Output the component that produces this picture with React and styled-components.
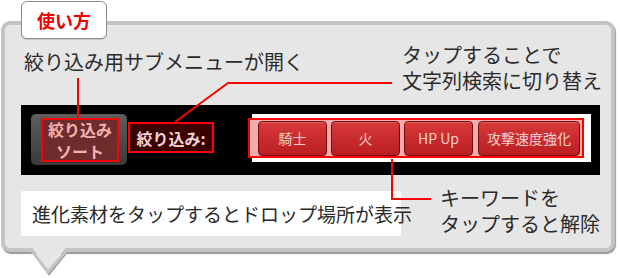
import styled, { createGlobalStyle } from "styled-components";

const GlobalStyle = createGlobalStyle`
    body {
        margin: 0;
        background: #ffffff;
        font-family: "Noto Sans CJK JP", "Noto Sans", sans-serif;
    }
`;

const Page = styled.div`
    position: relative;
    width: 620px;
    height: 278px;
    padding-top: 1px;
    box-sizing: border-box;
`;

const Tab = styled.div`
    position: relative;
    z-index: 2;
    margin-left: 21px;
    width: 86px;
    height: 38px;
    box-sizing: border-box;
    background: #ffffff;
    border: 1px solid #8c8c8c;
    border-radius: 6px;
    box-shadow: 0 1px 1px rgba(0, 0, 0, 0.15);
    display: flex;
    align-items: center;
    justify-content: center;
    color: #f00000;
    font-size: 18px;
    font-weight: bold;
`;

const Panel = styled.div`
    position: relative;
    z-index: 1;
    margin-top: -18px;
    margin-left: 1px;
    width: 614px;
    height: 231px;
    box-sizing: border-box;
    background: #e6e6e6;
    border: 4px solid #c4c4c4;
    border-radius: 9px;
    box-shadow: 1px 2px 1px #9a9a9a;
    padding: 0 11px 0 16px;
    display: flex;
    flex-direction: column;
    color: #2a2a2a;
`;

const TopRow = styled.div`
    display: grid;
    grid-template-columns: 381px 1fr;
    height: 80px;
`;

const Note = styled.div`
    font-size: 20px;
    line-height: 26px;
    padding-top: ${(p) => p.$top || 0}px;
    padding-left: ${(p) => p.$left || 0}px;
    white-space: nowrap;
`;

const Strip = styled.div`
    height: 70px;
    background: #000000;
    display: flex;
    align-items: flex-start;
    padding: 9px 0 0 10px;
    box-sizing: border-box;
`;

const SortButton = styled.div`
    width: 96px;
    height: 51px;
    box-sizing: border-box;
    border-radius: 5px;
    background: linear-gradient(#5e5e5e, #3a3a3a);
    padding: 4px 8px 3px 10px;
`;

const Marked = styled.div`
    height: 100%;
    box-sizing: border-box;
    border: 2px solid #ff0000;
    background: #6e2c2c;
    color: #f2b2b2;
    font-size: 16px;
    font-weight: bold;
    line-height: 22px;
    display: flex;
    flex-direction: column;
    align-items: center;
    justify-content: center;
`;

const FilterLabel = styled.div`
    margin-top: 8px;
    margin-left: 1px;
    width: 86px;
    height: 31px;
    box-sizing: border-box;
    border: 2px solid #ff0000;
    background: #3a0000;
    color: #f4d4d4;
    font-size: 16px;
    font-weight: bold;
    display: flex;
    align-items: center;
    justify-content: center;
`;

const KeywordBox = styled.div`
    margin-left: 38px;
    width: 339px;
    height: 48px;
    background: #ffffff;
    display: flex;
    align-items: center;
`;

const KeywordMark = styled.div`
    margin-left: -4px;
    width: 336px;
    height: 40px;
    box-sizing: border-box;
    border: 2px solid #ff0000;
    background: #f4abab;
    display: flex;
    align-items: center;
    gap: 4px;
    padding: 0 2px 0 8px;
`;

const Keyword = styled.div`
    width: ${(p) => p.$w}px;
    height: 35px;
    margin-left: ${(p) => p.$ml || 0}px;
    box-sizing: border-box;
    border: 1px solid #701010;
    border-radius: 4px;
    background: linear-gradient(#d93a3a, #b91e22);
    box-shadow: inset 0 1px 0 rgba(255, 255, 255, 0.2);
    color: #f9cfcf;
    font-size: 14px;
    display: flex;
    align-items: center;
    justify-content: center;
    white-space: nowrap;
`;

const BottomRow = styled.div`
    display: grid;
    grid-template-columns: 380px 1fr;
    column-gap: 39px;
    margin-top: 10px;
`;

const InfoBox = styled.div`
    margin-top: 6px;
    height: 45px;
    background: #ffffff;
    border-radius: 2px;
    display: flex;
    align-items: center;
    padding-left: 11px;
    font-size: 19px;
    white-space: nowrap;
`;

const Tail = styled.svg`
    position: absolute;
    left: 30px;
    top: 247px;
    z-index: 1;
`;

const Lines = styled.svg`
    position: absolute;
    left: 0;
    top: 0;
    z-index: 3;
    pointer-events: none;
`;

const keywords = [
    { label: "騎士", w: 69 },
    { label: "火", w: 69 },
    { label: "HP Up", w: 69 },
    { label: "攻撃速度強化", w: 102, ml: 1 },
];

export default function App() {
    return (
        <>
            <GlobalStyle />
            <Page>
                <Tab>使い方</Tab>
                <Panel>
                    <TopRow>
                        <Note $top={24} $left={3}>絞り込み用サブメニューが開く</Note>
                        <Note $top={17}>
                            タップすることで
                            <br />
                            文字列検索に切り替え
                        </Note>
                    </TopRow>
                    <Strip>
                        <SortButton>
                            <Marked>
                                <span>絞り込み</span>
                                <span>ソート</span>
                            </Marked>
                        </SortButton>
                        <FilterLabel>絞り込み:</FilterLabel>
                        <KeywordBox>
                            <KeywordMark>
                                {keywords.map((k) => (
                                    <Keyword key={k.label} $w={k.w} $ml={k.ml}>
                                        {k.label}
                                    </Keyword>
                                ))}
                            </KeywordMark>
                        </KeywordBox>
                    </Strip>
                    <BottomRow>
                        <InfoBox>進化素材をタップするとドロップ場所が表示</InfoBox>
                        <Note>
                            キーワードを
                            <br />
                            タップすると解除
                        </Note>
                    </BottomRow>
                </Panel>
                <Tail width="40" height="30" viewBox="0 0 40 30">
                    <polygon points="2,0 18,25 36,0" fill="#e6e6e6" />
                    <polyline points="2,4 18,26 36,4" fill="none" stroke="#9a9a9a" strokeWidth="2" transform="translate(1,1)" />
                    <polyline points="2,4 18,25 36,4" fill="none" stroke="#c4c4c4" strokeWidth="3" />
                    <rect x="5" y="0" width="28" height="5" fill="#e6e6e6" />
                </Tail>
                <Lines width="620" height="278" viewBox="0 0 620 278">
                    <g fill="none" stroke="#ff0000" strokeWidth="2">
                        <line x1="78" y1="78" x2="78" y2="119" />
                        <polyline points="175,122 228,83 392,83" />
                        <polyline points="392,159 392,199 431,199" />
                    </g>
                </Lines>
            </Page>
        </>
    );
}
